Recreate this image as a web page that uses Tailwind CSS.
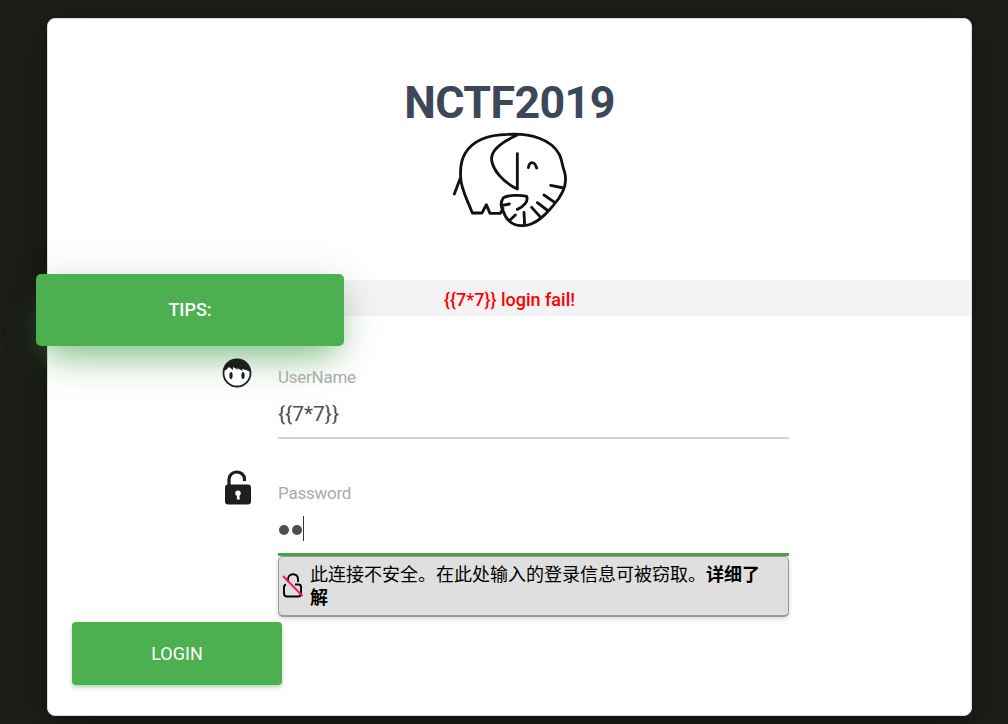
<!DOCTYPE html>
<html lang="zh-CN">
<head>
<meta charset="utf-8">
<title>NCTF2019</title>
<script src="https://cdn.jsdelivr.net/npm/@tailwindcss/browser@4"></script>
</head>
<body class="bg-[#1d1e19] h-[724px] overflow-hidden pt-[18px] pl-[47px] font-[Roboto,'Noto_Sans_CJK_SC',sans-serif] text-[#495057]">
<main class="w-[925px] h-[698px] rounded-[8px] bg-white border border-[#dcdcdb] shadow-[0_12px_40px_0_rgba(0,0,0,0.4)] flex flex-col">
  <header class="flex flex-col items-center h-[261px] pt-[57px] shrink-0">
    <h1 class="text-[44.8px] tracking-[-0.6px] leading-[54px] font-bold text-[#3c4858] whitespace-nowrap">NCTF2019</h1>
    <svg class="w-[120px] h-[100px]" viewBox="30 15 360 300" fill="none" stroke="#111" stroke-width="8.500" stroke-linecap="round" stroke-linejoin="round">
      <path d="M43 207L62 157C62 190 80 220 97 264H126L139 239L150 265H181L189 250M62 157C60 127 65 102 76 84C101 43 147 29 203 28C273 24 334 43 358 88C366 104 366 120 373 139C386 178 366 212 340 241C312 275 284 301 250 302C212 304 197 280 189 257C180 241 184 227 190 218C207 210 239 209 260 214C266 229 251 245 232 253M230 31C191 49 151 73 155 105C158 135 191 173 232 192V86M265 128C269 108 283 107 290 129M332 181L371 189M312 210L345 233M292 233L325 258M275 247L302 277M252 262L254 300M226 270L211 284M208 237L188 241"/>
    </svg>
  </header>
  <div class="relative h-[36px] bg-[#f3f3f3] shrink-0">
    <p class="text-center text-[18px] leading-[40px] font-medium text-[#f00]">{{7*7}} login fail!</p>
    <div class="absolute left-[-12px] top-[-6px] w-[308px] h-[72px] pb-[2px] rounded-[5px] bg-[#4caf50] text-white text-[18px] font-medium flex items-center justify-center shadow-[0_14px_26px_-12px_rgba(76,175,80,0.42),0_22px_42px_-12px_rgba(76,175,80,0.45),0_4px_42px_0_rgba(0,0,0,0.12)]">TIPS:</div>
  </div>
  <form class="relative flex flex-col">
    <div class="flex h-[123px] pl-[174px]">
      <svg class="w-[30px] h-[30px] mt-[42px] mr-[26px]" viewBox="0 0 30 30">
        <circle cx="15" cy="15" r="13.5" fill="#fff" stroke="#1d1f1e" stroke-width="1.8"/>
        <path d="M1 13C2 5 8 1 15 1S28 5 29 14L24 12L20 11L21 13L15 10L16 12L11 9L11 12L7 9L4 12Z" fill="#1d1f1e"/>
        <ellipse cx="9" cy="17.5" rx="1.6" ry="3.5" fill="#1d1f1e"/><ellipse cx="21" cy="17.5" rx="1.6" ry="3.5" fill="#1d1f1e"/>
      </svg>
      <div class="w-[511px] pt-[50px] border-b-2 border-[#d2d2d2]">
        <div class="text-[17px] tracking-[-0.25px] leading-[22px] text-[#aaa]">UserName</div>
        <div class="text-[21px] leading-[28px] mt-[12px]">{{7*7}}</div>
      </div>
    </div>
    <div class="flex h-[117px] pl-[174px]">
      <svg class="w-[30px] h-[36px] mt-[31px] ml-px mr-[25px]" viewBox="0 0 30 36">
        <path d="M6 16V9.500C6 5 9.500 2 13.500 2C18 2 21.500 5 21.500 9V11" fill="none" stroke="#1d1f1e" stroke-width="3.200"/>
        <rect x="2" y="14.500" width="26" height="20" rx="3.200" fill="#1d1f1e"/>
        <circle cx="15" cy="23.200" r="2.700" fill="#fff"/><path d="M14 24H16.300L16.800 29.500H13.800Z" fill="#fff"/>
      </svg>
      <div class="w-[511px] pt-[43px] border-b-[3px] border-[#48a34b]">
        <div class="text-[17px] tracking-[-0.25px] leading-[22px] text-[#aaa]">Password</div>
        <div class="flex items-center gap-[3px] pl-[1px] mt-[11px] h-[26px]">
          <span class="size-[10px] rounded-full bg-[#495057] mt-[3px]"></span><span class="size-[10px] rounded-full bg-[#495057] mt-[3px]"></span><span class="w-px h-[25px] bg-[#33383d] -ml-[2px]"></span>
        </div>
      </div>
    </div>
    <div class="ml-[230px] w-[511px] h-[61px] rounded-[5px] border border-[#999] border-b-2 bg-[#dfdfdf] shadow-[0_2px_5px_rgba(0,0,0,0.16)] flex pl-[3px] text-black">
      <svg class="w-[24px] h-[28px] mt-[15px] mr-[4px] shrink-0" viewBox="0 0 24 28" fill="none" stroke="#000" stroke-width="1.900">
        <path d="M6 10V7.500C6 4 8 2.300 11 2.300S16 4 16 7.500V10M4 12.500C2.500 13 2 14 2 15V21.500C2 23.500 3 24.500 5 24.500H16C18 24.500 19 23.500 19 21.500V15C19 13 18 12.500 16.500 12.500H13"/>
        <path d="M1 4L20.500 24" stroke="#ff1744"/>
      </svg>
      <div class="w-[460px] text-[18px] leading-[23px] pt-[5px] font-['Noto_Sans_CJK_SC',sans-serif]">
        <div class="whitespace-nowrap">此连接不安全。在此处输入的登录信息可被窃取。<b>详细了</b></div>
        <div class="font-bold">解</div>
      </div>
    </div>
    <button type="button" class="ml-[24px] mt-[5px] w-[210px] h-[63px] rounded-[4px] bg-[#4caf50] text-white text-[18px] pb-px font-normal shadow-[0_2px_3px_rgba(76,175,80,0.3),0_3px_6px_rgba(76,175,80,0.2)]">LOGIN</button>
  </form>
</main>
</body>
</html>
